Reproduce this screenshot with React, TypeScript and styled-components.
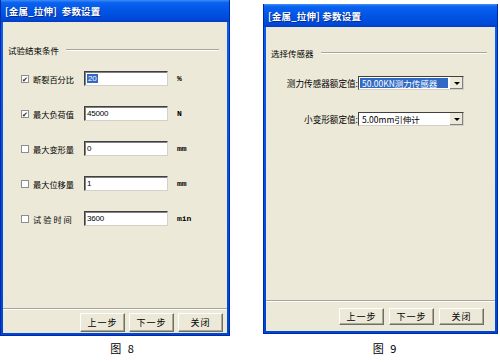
import React from "react";
import styled, { createGlobalStyle } from "styled-components";

const GlobalStyle = createGlobalStyle`
	html, body {
		margin: 0;
		padding: 0;
		background: #ffffff;
	}
	body {
		font-family: "Noto Sans CJK SC", "Liberation Sans", sans-serif;
		font-size: 9px;
		color: #000;
	}
`;

const Page = styled.div`
	display: flex;
	align-items: flex-start;
	width: 500px;
	height: 362px;
	overflow: hidden;
`;

const Figure = styled.div<{ $top: number; $left: number; $capShift: number }>`
	display: flex;
	flex-direction: column;
	align-items: center;
	margin-top: ${(p) => p.$top}px;
	margin-left: ${(p) => p.$left}px;
	& > span {
		margin-top: ${(p) => (p.$top === 0 ? 5 : 7)}px;
		padding-left: ${(p) => p.$capShift}px;
	}
`;

const Caption = styled.span`
	font-family: "Noto Sans CJK SC", sans-serif;
	font-size: 11px;
	line-height: 14px;
	letter-spacing: 2px;
`;

const Window = styled.div<{ $w: number; $h: number }>`
	display: flex;
	flex-direction: column;
	width: ${(p) => p.$w}px;
	height: ${(p) => p.$h}px;
	box-sizing: border-box;
	background: linear-gradient(180deg, #0a5ff0 0%, #0046d5 100%);
	border: 1px solid #0029a8;
	border-top: none;
	padding: 0 2px 2px 2px;
`;

const TitleBar = styled.div<{ $h: number }>`
	height: ${(p) => p.$h}px;
	flex-shrink: 0;
	display: flex;
	align-items: center;
	padding-left: 4px;
	background: linear-gradient(
		180deg,
		#3d8cf8 0%,
		#0a62ef 12%,
		#0055e5 50%,
		#0048d8 88%,
		#003cc0 100%
	);
	margin: 0 -2px;
	color: #fff;
	font-size: 9.5px;
	font-weight: bold;
	letter-spacing: 0.2px;
	white-space: pre;
	text-shadow: 1px 1px 0 #0a2a8a;
`;

const Body = styled.div`
	flex: 1;
	display: flex;
	flex-direction: column;
	background: #ece9d8;
`;

const Content = styled.div<{ $top: number; $left: number }>`
	flex: 1;
	padding: ${(p) => p.$top}px 8px 0 ${(p) => p.$left}px;
`;

const GroupHead = styled.div`
	display: flex;
	align-items: center;
	gap: 7px;
	font-size: 8.5px;
	line-height: 14px;
	&::after {
		content: "";
		flex: 1;
		height: 0;
		border-top: 1px solid #a8a596;
		border-bottom: 1px solid #ffffff;
	}
`;

const CheckRows = styled.div`
	display: flex;
	flex-direction: column;
	gap: 20px;
	margin-top: 14px;
	padding-left: 13px;
`;

const Row = styled.div`
	display: flex;
	align-items: center;
	height: 15px;
`;

const Check = styled.span<{ $on: boolean }>`
	width: 8px;
	height: 8px;
	box-sizing: border-box;
	border: 1px solid #8e8e8e;
	background: #fff;
	display: flex;
	align-items: center;
	justify-content: center;
	font-size: 7px;
	line-height: 8px;
	color: #222;
	&::after {
		content: "${(p) => (p.$on ? "✔" : "")}";
	}
`;

const CheckLabel = styled.span<{ $spaced?: boolean }>`
	width: 51px;
	margin-left: 4px;
	font-size: 8.2px;
	letter-spacing: ${(p) => (p.$spaced ? "2px" : "0")};
	white-space: nowrap;
`;

const TextBox = styled.div`
	width: 84px;
	height: 15px;
	box-sizing: border-box;
	background: #fff;
	border-top: 1px solid #404040;
	border-left: 1px solid #404040;
	border-right: 1px solid #d4d0c8;
	border-bottom: 1px solid #d4d0c8;
	box-shadow: inset 1px 1px 0 #808080;
	display: flex;
	align-items: center;
	padding-left: 2px;
	font-family: "Liberation Sans", sans-serif;
	font-size: 8px;
	letter-spacing: -0.2px;
`;

const Selected = styled.span`
	background: #316ac5;
	color: #fff;
	padding: 0 1px;
`;

const Unit = styled.span`
	margin-left: 9px;
	font-family: "Liberation Mono", monospace;
	font-size: 8px;
	font-weight: bold;
`;

const ComboRows = styled.div`
	display: flex;
	flex-direction: column;
	gap: 22px;
	margin-top: 16px;
`;

const ComboRow = styled.div`
	display: flex;
	align-items: center;
	height: 14px;
`;

const ComboLabel = styled.span`
	width: 87px;
	text-align: right;
	font-size: 8.6px;
	white-space: nowrap;
`;

const Combo = styled.div`
	width: 106px;
	height: 14px;
	box-sizing: border-box;
	background: #fff;
	border: 1px solid #404040;
	border-right-color: #d4d0c8;
	border-bottom-color: #d4d0c8;
	display: flex;
	align-items: stretch;
	font-size: 8.5px;
`;

const ComboValue = styled.span<{ $active?: boolean }>`
	flex: 1;
	display: flex;
	align-items: center;
	margin: 1px;
	padding-left: 2px;
	background: ${(p) => (p.$active ? "#316ac5" : "transparent")};
	color: ${(p) => (p.$active ? "#fff" : "#000")};
	white-space: nowrap;
	overflow: hidden;
`;

const DropButton = styled.span`
	width: 13px;
	background: #ece9d8;
	border-left: 1px solid #fff;
	box-shadow: inset -1px -1px 0 #808080;
	display: flex;
	align-items: center;
	justify-content: center;
	&::after {
		content: "";
		border-left: 3px solid transparent;
		border-right: 3px solid transparent;
		border-top: 3px solid #000;
	}
`;

const Footer = styled.div<{ $pt: number; $pb: number; $pr: number; $gap: number }>`
	display: flex;
	justify-content: flex-end;
	gap: ${(p) => p.$gap}px;
	padding: ${(p) => p.$pt}px ${(p) => p.$pr}px ${(p) => p.$pb}px 0;
	border-top: 1px solid #a8a596;
	box-shadow: inset 0 1px 0 #fff;
`;

const Button = styled.button<{ $w: number; $h: number }>`
	width: ${(p) => p.$w}px;
	height: ${(p) => p.$h}px;
	padding: 0;
	background: #ece9d8;
	border: 1px solid;
	border-color: #ffffff #716f64 #716f64 #ffffff;
	box-shadow: inset -1px -1px 0 #aca899;
	font-family: "Noto Sans CJK SC", sans-serif;
	font-size: 9px;
	letter-spacing: 1px;
	color: #000;
`;

const checks = [
	{ on: true, label: "断裂百分比", value: "20", unit: "%", sel: true },
	{ on: true, label: "最大负荷值", value: "45000", unit: "N" },
	{ on: false, label: "最大变形量", value: "0", unit: "mm" },
	{ on: false, label: "最大位移量", value: "1", unit: "mm" },
	{ on: false, label: "试验时间", value: "3600", unit: "min", spaced: true },
];

const App = () => {
	return (
		<Page>
			<GlobalStyle />
			<Figure $top={0} $left={0} $capShift={16}>
				<Window $w={230} $h={336}>
					<TitleBar $h={22}>[金属_拉伸]  参数设置</TitleBar>
					<Body>
						<Content $top={21} $left={5}>
							<GroupHead>试验结束条件</GroupHead>
							<CheckRows>
								{checks.map((c) => (
									<Row key={c.label}>
										<Check $on={c.on} />
										<CheckLabel $spaced={c.spaced}>{c.label}</CheckLabel>
										<TextBox>
											{c.sel ? <Selected>{c.value}</Selected> : c.value}
										</TextBox>
										<Unit>{c.unit}</Unit>
									</Row>
								))}
							</CheckRows>
						</Content>
						<Footer $pt={4} $pb={1} $pr={4} $gap={4}>
							<Button $w={45} $h={19}>上一步</Button>
							<Button $w={45} $h={19}>下一步</Button>
							<Button $w={45} $h={19}>关闭</Button>
						</Footer>
					</Body>
				</Window>
				<Caption>图 8</Caption>
			</Figure>
			<Figure $top={4} $left={33} $capShift={10}>
				<Window $w={235} $h={330}>
					<TitleBar $h={23}>[金属_拉伸] 参数设置</TitleBar>
					<Body>
						<Content $top={19} $left={5}>
							<GroupHead>选择传感器</GroupHead>
							<ComboRows>
								<ComboRow>
									<ComboLabel>测力传感器额定值:</ComboLabel>
									<Combo>
										<ComboValue $active>50.00KN测力传感器</ComboValue>
										<DropButton />
									</Combo>
								</ComboRow>
								<ComboRow>
									<ComboLabel>小变形额定值:</ComboLabel>
									<Combo>
										<ComboValue>5.00mm引伸计</ComboValue>
										<DropButton />
									</Combo>
								</ComboRow>
							</ComboRows>
						</Content>
						<Footer $pt={7} $pb={6} $pr={11} $gap={5}>
							<Button $w={45} $h={17}>上一步</Button>
							<Button $w={45} $h={17}>下一步</Button>
							<Button $w={45} $h={17}>关闭</Button>
						</Footer>
					</Body>
				</Window>
				<Caption>图 9</Caption>
			</Figure>
		</Page>
	);
};

export default App;
